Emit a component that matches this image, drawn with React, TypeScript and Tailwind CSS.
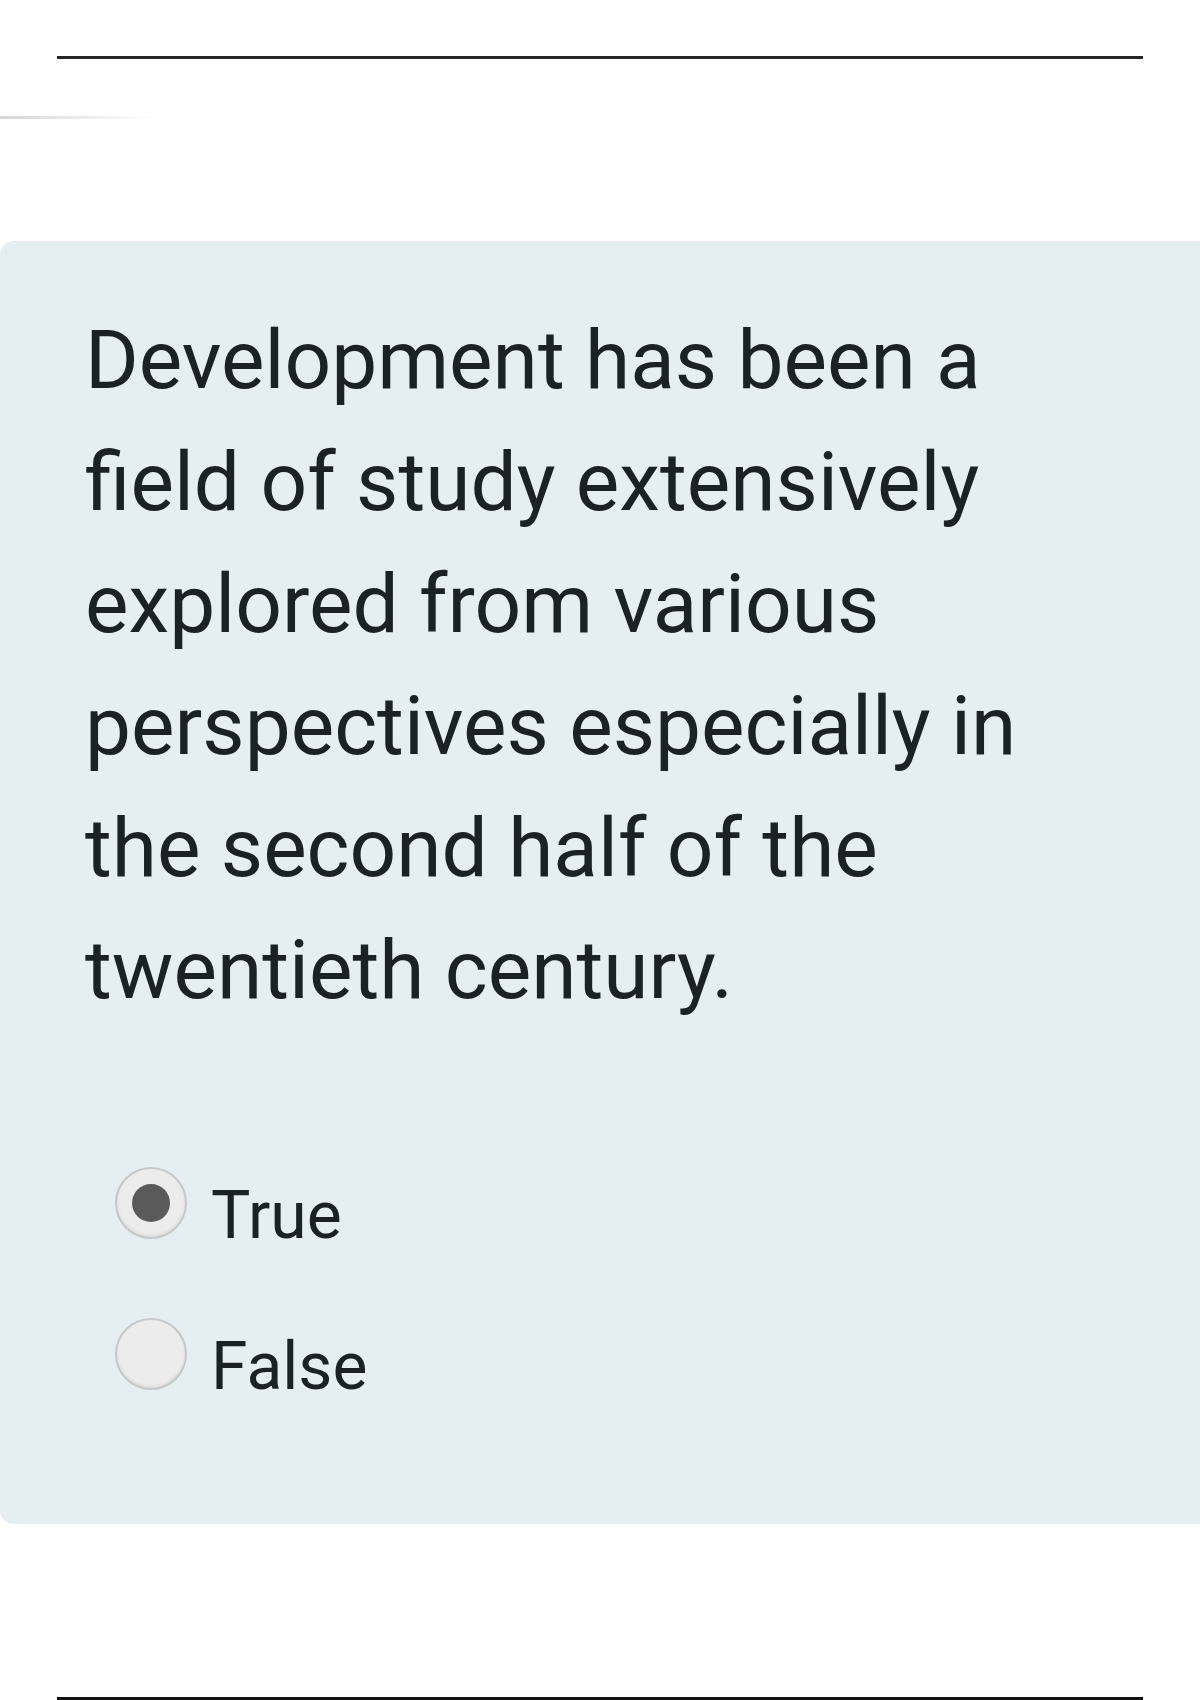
import React from "react";

const lines = [
  "Development has been a",
  "field of study extensively",
  "explored from various",
  "perspectives especially in",
  "the second half of the",
  "twentieth century.",
];

const Radio = ({ checked }: { checked?: boolean }) => (
  <span className="mb-[26px] flex h-[72px] w-[72px] shrink-0 items-center justify-center rounded-full border-2 border-[#c4c8c9] bg-[#ececec] shadow-[inset_0_-2px_3px_rgba(0,0,0,0.06)]">
    {checked && <span className="h-[38px] w-[38px] rounded-full bg-[#5a5a5a]" />}
  </span>
);

const App = () => {
  // question state, True is picked in the shot
  const [answer, setAnswer] = React.useState("true");

  return (
    <div className="flex h-[1700px] w-[1200px] flex-col bg-white font-['Roboto',sans-serif] text-[#1b2225]">
      {/* top rule */}
      <div className="mx-[57px] mt-[56px] h-[3px] bg-[#262626]" />
      <div className="mt-[57px] h-[3px] w-[155px] bg-gradient-to-r from-[#d6d6d6] to-white" />

      {/* question card */}
      <div className="mt-[122px] h-[1283px] rounded-l-[14px] bg-[#e5eff2] pl-[85px] pt-[58px]">
        <p className="text-[82px] leading-[122px]">
          {lines.map((l) => (
            <span key={l} className="block whitespace-nowrap">
              {l}
            </span>
          ))}
        </p>

        <div className="ml-[30px] mt-[136px] flex flex-col gap-[53px]">
          {[
            { id: "true", label: "True" },
            { id: "false", label: "False" },
          ].map((o) => (
            <label
              key={o.id}
              onClick={() => setAnswer(o.id)}
              className="flex cursor-pointer items-center gap-[24px]"
            >
              <Radio checked={answer === o.id} />
              <span className="text-[66px] leading-[66px]">{o.label}</span>
            </label>
          ))}
        </div>
      </div>

      <div className="flex-1" />
      {/* bottom rule */}
      <div className="mx-[57px] h-[3px] bg-[#111]" />
    </div>
  );
};

export default App;
